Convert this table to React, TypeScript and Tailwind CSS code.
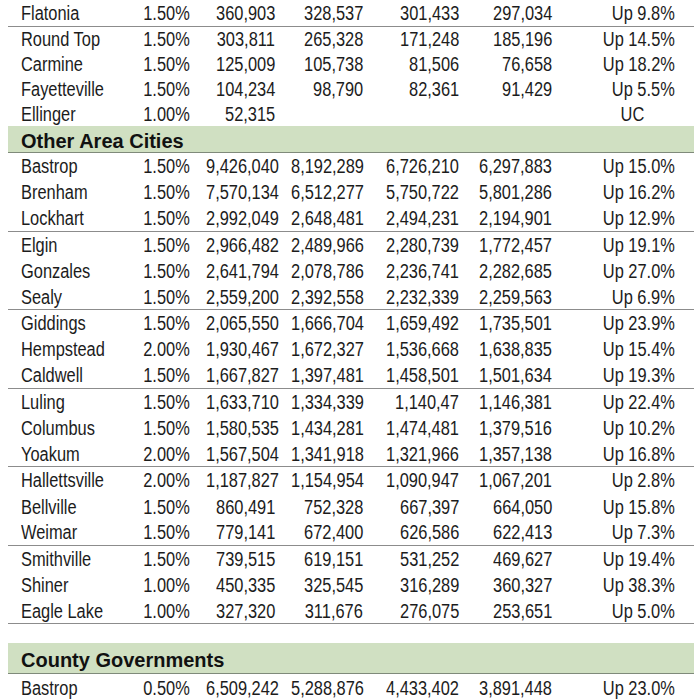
type Row = {
  name: string;
  rate: string;
  vals: string[];
  change: string;
  line?: boolean;
};

const topRows: Row[] = [
  { name: "Flatonia", rate: "1.50%", vals: ["360,903", "328,537", "301,433", "297,034"], change: "Up 9.8%", line: true },
  { name: "Round Top", rate: "1.50%", vals: ["303,811", "265,328", "171,248", "185,196"], change: "Up 14.5%" },
  { name: "Carmine", rate: "1.50%", vals: ["125,009", "105,738", "81,506", "76,658"], change: "Up 18.2%" },
  { name: "Fayetteville", rate: "1.50%", vals: ["104,234", "98,790", "82,361", "91,429"], change: "Up 5.5%" },
  { name: "Ellinger", rate: "1.00%", vals: ["52,315", "", "", ""], change: "UC" },
];

const cityRows: Row[] = [
  { name: "Bastrop", rate: "1.50%", vals: ["9,426,040", "8,192,289", "6,726,210", "6,297,883"], change: "Up 15.0%" },
  { name: "Brenham", rate: "1.50%", vals: ["7,570,134", "6,512,277", "5,750,722", "5,801,286"], change: "Up 16.2%" },
  { name: "Lockhart", rate: "1.50%", vals: ["2,992,049", "2,648,481", "2,494,231", "2,194,901"], change: "Up 12.9%", line: true },
  { name: "Elgin", rate: "1.50%", vals: ["2,966,482", "2,489,966", "2,280,739", "1,772,457"], change: "Up 19.1%" },
  { name: "Gonzales", rate: "1.50%", vals: ["2,641,794", "2,078,786", "2,236,741", "2,282,685"], change: "Up 27.0%" },
  { name: "Sealy", rate: "1.50%", vals: ["2,559,200", "2,392,558", "2,232,339", "2,259,563"], change: "Up 6.9%", line: true },
  { name: "Giddings", rate: "1.50%", vals: ["2,065,550", "1,666,704", "1,659,492", "1,735,501"], change: "Up 23.9%" },
  { name: "Hempstead", rate: "2.00%", vals: ["1,930,467", "1,672,327", "1,536,668", "1,638,835"], change: "Up 15.4%" },
  { name: "Caldwell", rate: "1.50%", vals: ["1,667,827", "1,397,481", "1,458,501", "1,501,634"], change: "Up 19.3%", line: true },
  { name: "Luling", rate: "1.50%", vals: ["1,633,710", "1,334,339", "1,140,47", "1,146,381"], change: "Up 22.4%" },
  { name: "Columbus", rate: "1.50%", vals: ["1,580,535", "1,434,281", "1,474,481", "1,379,516"], change: "Up 10.2%" },
  { name: "Yoakum", rate: "2.00%", vals: ["1,567,504", "1,341,918", "1,321,966", "1,357,138"], change: "Up 16.8%", line: true },
  { name: "Hallettsville", rate: "2.00%", vals: ["1,187,827", "1,154,954", "1,090,947", "1,067,201"], change: "Up 2.8%" },
  { name: "Bellville", rate: "1.50%", vals: ["860,491", "752,328", "667,397", "664,050"], change: "Up 15.8%" },
  { name: "Weimar", rate: "1.50%", vals: ["779,141", "672,400", "626,586", "622,413"], change: "Up 7.3%", line: true },
  { name: "Smithville", rate: "1.50%", vals: ["739,515", "619,151", "531,252", "469,627"], change: "Up 19.4%" },
  { name: "Shiner", rate: "1.00%", vals: ["450,335", "325,545", "316,289", "360,327"], change: "Up 38.3%" },
  { name: "Eagle Lake", rate: "1.00%", vals: ["327,320", "311,676", "276,075", "253,651"], change: "Up 5.0%", line: true },
];

const countyRows: Row[] = [
  { name: "Bastrop", rate: "0.50%", vals: ["6,509,242", "5,288,876", "4,433,402", "3,891,448"], change: "Up 23.0%" },
];

// Arial Narrow isn't installed, so squeeze Liberation Sans to the same width
function Num({ children }: { children: string }) {
  return (
    <div className="text-right whitespace-nowrap">
      <span className="inline-block scale-x-[0.82] origin-right">{children}</span>
    </div>
  );
}

function DataRow({ row, h }: { row: Row; h: string }) {
  return (
    <div
      className={`grid grid-cols-[125px_57px_85px_88px_96px_93px_123px_19px] items-center text-[20px] leading-none text-[#1c1c1c] ${h} ${
        row.line ? "border-b border-[#8c8c8c]" : ""
      }`}
    >
      <div className="pl-[13px] whitespace-nowrap">
        <span className="inline-block scale-x-[0.82] origin-left">{row.name}</span>
      </div>
      <Num>{row.rate}</Num>
      {row.vals.map((v, i) => (
        <Num key={i}>{v}</Num>
      ))}
      {row.change === "UC" ? (
        <div className="text-right pr-[28px]">
          <span className="inline-block scale-x-[0.82] origin-center">UC</span>
        </div>
      ) : (
        <Num>{row.change}</Num>
      )}
      <div />
    </div>
  );
}

function Band({ title, h }: { title: string; h: string }) {
  return (
    <div className={`flex items-center bg-[#d0e0c2] border-b border-[#7f8a7a] pl-[13px] pt-[4px] ${h}`}>
      <span className="text-[20px] font-bold leading-none text-[#111]">{title}</span>
    </div>
  );
}

export default function App() {
  return (
    <div
      className="w-[700px] h-[700px] overflow-hidden bg-white px-[8px]"
      style={{ fontFamily: '"Liberation Sans", Arial, sans-serif' }}
    >
      <div className="w-[686px]">
        {/* top cities */}
        <DataRow row={topRows[0]} h="h-[27px]" />
        {topRows.slice(1).map((r) => (
          <DataRow key={r.name} row={r} h="h-[24.75px]" />
        ))}

        <Band title="Other Area Cities" h="h-[27px]" />
        {cityRows.map((r) => (
          <DataRow key={r.name} row={r} h="h-[26.2px]" />
        ))}

        <div className="h-[19px]" />

        <Band title="County Governments" h="h-[31px]" />
        {countyRows.map((r) => (
          <DataRow key={r.name} row={r} h="h-[28px]" />
        ))}
      </div>
    </div>
  );
}
